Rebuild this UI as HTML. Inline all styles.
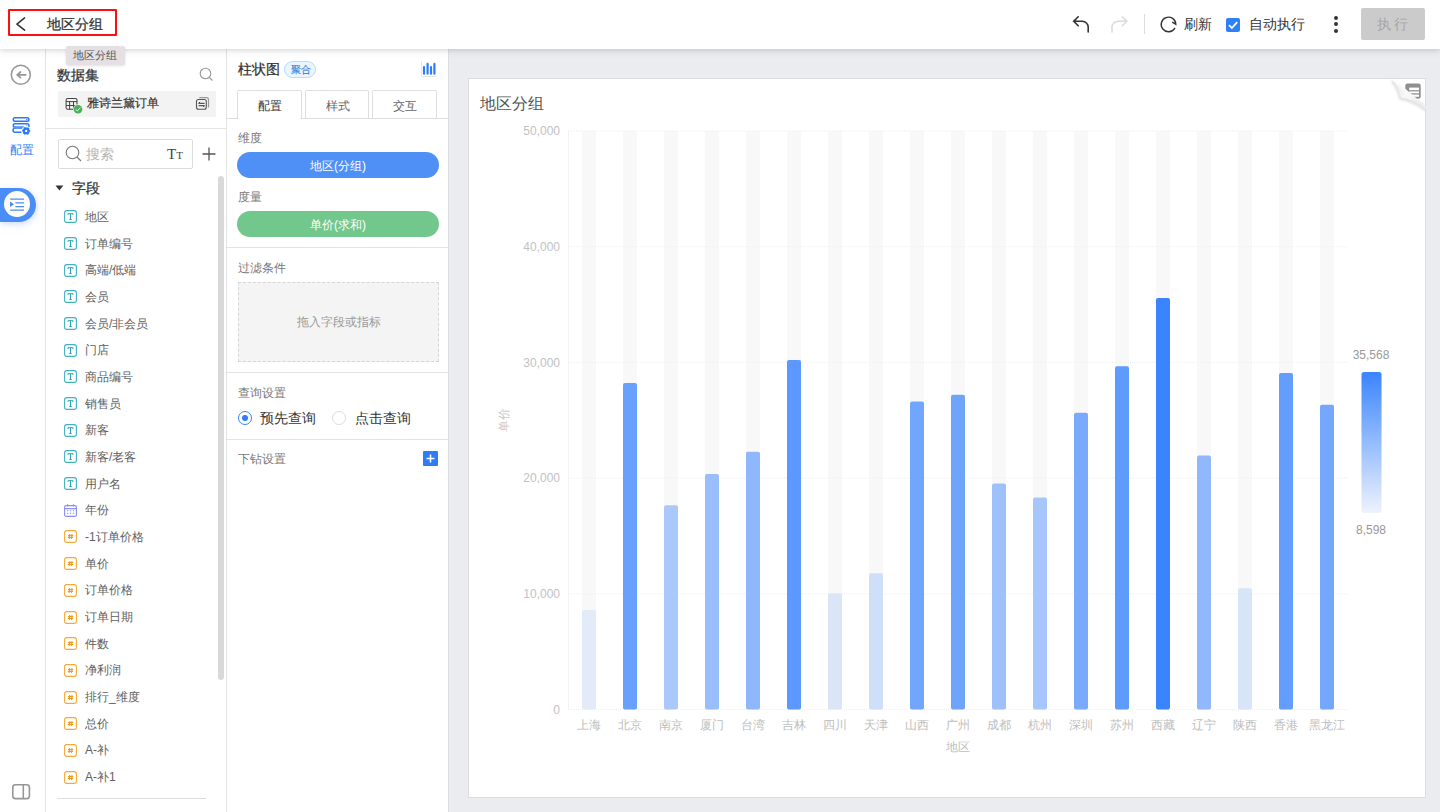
<!DOCTYPE html>
<html><head><meta charset="utf-8">
<style>
*{box-sizing:border-box;margin:0;padding:0}
html,body{width:1440px;height:812px;overflow:hidden}
body{position:relative;background:#ebecf0;font-family:"Liberation Sans",sans-serif;color:#333}
.a{position:absolute}
.hdr{left:0;top:0;width:1440px;height:49px;background:#fff;box-shadow:0 2px 3px rgba(0,0,0,.07),0 4px 7px rgba(0,0,0,.06);z-index:5}
.t{position:absolute;white-space:nowrap;line-height:1}
.nav{left:0;top:48px;width:46px;height:764px;background:#fff;border-right:1px solid #e3e3e3}
.p1{left:46px;top:48px;width:181px;height:764px;background:#fff;border-right:1px solid #e3e3e3}
.p2{left:227px;top:48px;width:222px;height:764px;background:#fff;border-right:1px solid #dedede}
.card{left:468px;top:78px;width:958px;height:720px;background:#fff;border:1px solid #dcdcdc}
.fi{position:absolute;left:64px;width:13px;height:13px;border-radius:2px}
.ft{border:1px solid #45b7c2;color:#2aa5b3;font-family:"Liberation Serif",serif;font-size:10px;line-height:11px;text-align:center}
.fn{border:1px solid #f5a937;color:#f09a1a;font-size:8px;line-height:11px;text-align:center;font-weight:bold}
.fl{position:absolute;left:84px;font-size:12px;color:#555;line-height:1;white-space:nowrap}
</style></head><body>

<!-- header -->
<div class="a hdr">
  <div class="a" style="left:8px;top:9px;width:109px;height:26.5px;border:2px solid #fe0f0f;border-radius:1px"></div>
  <svg class="a" style="left:14px;top:15px" width="14" height="18" viewBox="0 0 14 18"><path d="M10.6 2.9 L2.9 9.1 L10.6 15.2" fill="none" stroke="#333" stroke-width="1.5" stroke-linecap="round" stroke-linejoin="round"/></svg>
  <div class="t" style="left:47px;top:17px;font-size:14px;color:#333;-webkit-text-stroke:0.25px #333">地区分组</div>

  <!-- right toolbar -->
  <svg class="a" style="left:1071px;top:14px" width="20" height="20" viewBox="0 0 20 20"><path d="M7.2 2.8 L2.7 7.3 L7.2 11.8 M2.7 7.3 H11.2 A6 6 0 0 1 17.2 13.3 V18" fill="none" stroke="#333" stroke-width="1.6" stroke-linecap="round"/></svg>
  <svg class="a" style="left:1109px;top:14px" width="20" height="20" viewBox="0 0 20 20"><path d="M13.3 2.8 L17.8 7.3 L13.3 11.8 M17.8 7.3 H9 A6 6 0 0 0 3 13.3 V18" fill="none" stroke="#dcdcdc" stroke-width="1.6" stroke-linecap="round"/></svg>
  <div class="a" style="left:1144px;top:14px;width:1px;height:20px;background:#ddd"></div>
  <svg class="a" style="left:1159px;top:15px" width="20" height="19" viewBox="0 0 20 19"><path d="M15.7 13.3 A7.3 7.3 0 1 1 16.8 9.3 L13.7 7.3" fill="none" stroke="#333" stroke-width="1.4" stroke-linecap="round" stroke-linejoin="miter"/></svg>
  <div class="t" style="left:1184px;top:17px;font-size:14px;color:#333">刷新</div>
  <div class="a" style="left:1226px;top:18px;width:14px;height:14px;background:#2f7ff6;border-radius:2px"></div>
  <svg class="a" style="left:1226px;top:18px" width="14" height="14" viewBox="0 0 14 14"><path d="M3 7.2 L5.9 10 L11.2 4.2" fill="none" stroke="#fff" stroke-width="1.8"/></svg>
  <div class="t" style="left:1249px;top:17px;font-size:14px;color:#333">自动执行</div>
  <div class="a" style="left:1334px;top:16px;width:4px;height:4px;border-radius:2px;background:#333"></div>
  <div class="a" style="left:1334px;top:22px;width:4px;height:4px;border-radius:2px;background:#333"></div>
  <div class="a" style="left:1334px;top:28.5px;width:4px;height:4px;border-radius:2px;background:#333"></div>
  <div class="a" style="left:1361px;top:8px;width:64px;height:32px;background:#cbcbcb;border-radius:2px"></div>
  <div class="t" style="left:1377px;top:17px;font-size:14px;color:#a6a6a6;letter-spacing:3px">执行</div>
</div>

<!-- tooltip -->
<div class="a" style="left:66px;top:46px;width:59px;height:19px;background:#e4e0e4;border-radius:2px;z-index:6;box-shadow:0 1px 3px rgba(0,0,0,.12)"></div>
<div class="t" style="left:73px;top:50px;font-size:11px;color:#555;z-index:7">地区分组</div>

<div class="a nav"></div>
<svg class="a" style="left:10px;top:64px" width="22" height="22" viewBox="0 0 22 22"><circle cx="10.8" cy="10.8" r="9.5" fill="none" stroke="#969696" stroke-width="1.5"/><path d="M10.5 8 L7.1 10.8 L10.5 13.6 M7.1 10.8 H15.7" fill="none" stroke="#969696" stroke-width="1.7" stroke-linecap="round" stroke-linejoin="round"/></svg>
<svg class="a" style="left:6px;top:110px" width="30" height="30" viewBox="0 0 30 30"><g fill="none" stroke="#2b78f5" stroke-width="1.5" stroke-linecap="round"><rect x="7.25" y="7.75" width="15.7" height="3.5" rx="1.75"/><path d="M22.9 16.4 V15.5 A1.75 1.75 0 0 0 21.15 13.75 H9 A1.75 1.75 0 0 0 9 17.25 H17.4"/><path d="M9 18.3 A1.75 1.75 0 0 0 9 22.25 H15"/></g><path d="M8.2 16.6 H17.8 L16.4 18.9 H8.2 Z" fill="#5a96f7"/><circle cx="20.7" cy="9.5" r="0.8" fill="#5a96f7"/><circle cx="20.7" cy="15.5" r="0.7" fill="#8ab4fa"/><circle cx="20.2" cy="20.9" r="4.6" fill="#fff"/><circle cx="20.2" cy="20.9" r="2.3" fill="none" stroke="#2b78f5" stroke-width="2.2"/><circle cx="20.2" cy="20.9" r="3.4" fill="none" stroke="#2b78f5" stroke-width="1.3" stroke-dasharray="1.7 1.86" transform="rotate(-15 20.2 20.9)"/></svg>
<div class="t" style="left:10px;top:144px;font-size:12px;color:#2f7cf6">配置</div>
<div class="a" style="left:0;top:188px;width:36px;height:34px;background:#4a8df6;border-radius:0 17px 17px 0;box-shadow:1px 2px 6px rgba(60,120,240,.25)"></div>
<div class="a" style="left:4px;top:191px;width:26.3px;height:26.3px;background:#fffdf8;border-radius:50%"></div>
<svg class="a" style="left:9px;top:196px" width="17" height="17" viewBox="0 0 17 17"><path d="M1 5.5 L5 8.3 L1 11.1 Z" fill="#4a8df6"/><path d="M1.2 3.1 H15 M6.4 6.9 H15 M6.4 10.6 H15 M1.2 14.2 H15" stroke="#4a8df6" stroke-width="1.2"/></svg>
<svg class="a" style="left:12px;top:784px" width="19" height="16" viewBox="0 0 19 16"><rect x="0.8" y="0.8" width="16.6" height="13.8" rx="2.6" fill="none" stroke="#969696" stroke-width="1.6"/><path d="M11.3 0.8 V14.6" stroke="#969696" stroke-width="1.6"/></svg>


<!-- data panel -->
<div class="a p1"></div>
<div class="t" style="left:57px;top:68px;font-size:14px;color:#333;-webkit-text-stroke:0.25px #333">数据集</div>
<svg class="a" style="left:199px;top:67px" width="15" height="15" viewBox="0 0 15 15"><circle cx="6.5" cy="6.5" r="5.3" fill="none" stroke="#999" stroke-width="1.1"/><path d="M10.3 10.3 L13.5 13.5" stroke="#999" stroke-width="1.1"/></svg>
<div class="a" style="left:58px;top:90.5px;width:158px;height:26.5px;background:#f3f3f3"></div>
<svg class="a" style="left:60px;top:92px" width="24" height="24" viewBox="60 92 24 24"><rect x="66.1" y="98.4" width="10.9" height="10.9" rx="1.6" fill="none" stroke="#444" stroke-width="1.05"/><path d="M66.1 101.6 H77 M66.1 105.5 H77 M69.6 101.6 V109.3 M73.5 101.6 V109.3" stroke="#444" stroke-width="1"/><circle cx="78" cy="109.2" r="4.9" fill="#f3f3f3"/><circle cx="78" cy="109.2" r="4.3" fill="#4bb05a"/><path d="M75.7 109.4 L77.4 110.9 L80.4 107.7" fill="none" stroke="#fff" stroke-width="0.9"/></svg>
<div class="t" style="left:87px;top:97px;font-size:12px;color:#333;-webkit-text-stroke:0.2px #333">雅诗兰黛订单</div>
<svg class="a" style="left:190px;top:92px" width="24" height="24" viewBox="190 92 24 24"><path d="M199.3 97.7 H206.5 A2 2 0 0 1 208.5 99.7 V107.5" fill="none" stroke="#999" stroke-width="1.2"/><rect x="196.5" y="99.5" width="9.8" height="9.8" rx="2" fill="#f3f3f3" stroke="#555" stroke-width="1.1"/><path d="M198.6 103.3 H204.6 M198.6 103.3 L200 101.9 M198.6 105.7 H204.6 M204.6 105.7 L203.2 107.1" fill="none" stroke="#333" stroke-width="1"/></svg>
<div class="a" style="left:46px;top:128px;width:180px;height:1px;background:#e6e6e6"></div>
<div class="a" style="left:58px;top:139px;width:135px;height:30px;border:1px solid #dcdcdc;border-radius:2px"></div>
<svg class="a" style="left:65px;top:145px" width="18" height="18" viewBox="0 0 18 18"><circle cx="7.5" cy="7.5" r="6.3" fill="none" stroke="#777" stroke-width="1.1"/><path d="M12 12 L16 16" stroke="#777" stroke-width="1.1"/></svg>
<div class="t" style="left:86px;top:147px;font-size:14px;color:#b5b5b5">搜索</div>
<div class="t" style="left:167px;top:147px;font-size:15px;color:#444;font-family:'Liberation Serif',serif">T<span style="font-size:11px">T</span></div>
<svg class="a" style="left:201px;top:146px" width="16" height="16" viewBox="0 0 16 16"><path d="M8 1.5 V14.5 M1.5 8 H14.5" stroke="#555" stroke-width="1.3"/></svg>
<svg class="a" style="left:55px;top:185px" width="9" height="6" viewBox="0 0 9 6"><path d="M0.5 0.5 H8.3 L4.4 5.5 Z" fill="#333"/></svg>
<div class="t" style="left:72px;top:181px;font-size:14px;color:#333;-webkit-text-stroke:0.25px #333">字段</div>
<div class="a" style="left:218px;top:176px;width:6px;height:504px;background:#d9d9d9;border-radius:3px"></div>
<svg class="a" style="left:64px;top:210.4px" width="13" height="13" viewBox="0 0 13 13"><rect x="0.6" y="0.6" width="11.8" height="11.8" rx="2.2" fill="none" stroke="#3fb3bf" stroke-width="1.1"/><path d="M4 3.7 H9 M4 3.7 V4.9 M9 3.7 V4.9 M6.5 3.7 V9.5 M5.3 9.5 H7.7" fill="none" stroke="#2aa6b4" stroke-width="1"/></svg>
<div class="t" style="left:85px;top:210.9px;font-size:12px;color:#5e5e5e">地区</div>
<svg class="a" style="left:64px;top:237.1px" width="13" height="13" viewBox="0 0 13 13"><rect x="0.6" y="0.6" width="11.8" height="11.8" rx="2.2" fill="none" stroke="#3fb3bf" stroke-width="1.1"/><path d="M4 3.7 H9 M4 3.7 V4.9 M9 3.7 V4.9 M6.5 3.7 V9.5 M5.3 9.5 H7.7" fill="none" stroke="#2aa6b4" stroke-width="1"/></svg>
<div class="t" style="left:85px;top:237.6px;font-size:12px;color:#5e5e5e">订单编号</div>
<svg class="a" style="left:64px;top:263.7px" width="13" height="13" viewBox="0 0 13 13"><rect x="0.6" y="0.6" width="11.8" height="11.8" rx="2.2" fill="none" stroke="#3fb3bf" stroke-width="1.1"/><path d="M4 3.7 H9 M4 3.7 V4.9 M9 3.7 V4.9 M6.5 3.7 V9.5 M5.3 9.5 H7.7" fill="none" stroke="#2aa6b4" stroke-width="1"/></svg>
<div class="t" style="left:85px;top:264.2px;font-size:12px;color:#5e5e5e">高端/低端</div>
<svg class="a" style="left:64px;top:290.4px" width="13" height="13" viewBox="0 0 13 13"><rect x="0.6" y="0.6" width="11.8" height="11.8" rx="2.2" fill="none" stroke="#3fb3bf" stroke-width="1.1"/><path d="M4 3.7 H9 M4 3.7 V4.9 M9 3.7 V4.9 M6.5 3.7 V9.5 M5.3 9.5 H7.7" fill="none" stroke="#2aa6b4" stroke-width="1"/></svg>
<div class="t" style="left:85px;top:290.9px;font-size:12px;color:#5e5e5e">会员</div>
<svg class="a" style="left:64px;top:317.1px" width="13" height="13" viewBox="0 0 13 13"><rect x="0.6" y="0.6" width="11.8" height="11.8" rx="2.2" fill="none" stroke="#3fb3bf" stroke-width="1.1"/><path d="M4 3.7 H9 M4 3.7 V4.9 M9 3.7 V4.9 M6.5 3.7 V9.5 M5.3 9.5 H7.7" fill="none" stroke="#2aa6b4" stroke-width="1"/></svg>
<div class="t" style="left:85px;top:317.6px;font-size:12px;color:#5e5e5e">会员/非会员</div>
<svg class="a" style="left:64px;top:343.8px" width="13" height="13" viewBox="0 0 13 13"><rect x="0.6" y="0.6" width="11.8" height="11.8" rx="2.2" fill="none" stroke="#3fb3bf" stroke-width="1.1"/><path d="M4 3.7 H9 M4 3.7 V4.9 M9 3.7 V4.9 M6.5 3.7 V9.5 M5.3 9.5 H7.7" fill="none" stroke="#2aa6b4" stroke-width="1"/></svg>
<div class="t" style="left:85px;top:344.2px;font-size:12px;color:#5e5e5e">门店</div>
<svg class="a" style="left:64px;top:370.4px" width="13" height="13" viewBox="0 0 13 13"><rect x="0.6" y="0.6" width="11.8" height="11.8" rx="2.2" fill="none" stroke="#3fb3bf" stroke-width="1.1"/><path d="M4 3.7 H9 M4 3.7 V4.9 M9 3.7 V4.9 M6.5 3.7 V9.5 M5.3 9.5 H7.7" fill="none" stroke="#2aa6b4" stroke-width="1"/></svg>
<div class="t" style="left:85px;top:370.9px;font-size:12px;color:#5e5e5e">商品编号</div>
<svg class="a" style="left:64px;top:397.1px" width="13" height="13" viewBox="0 0 13 13"><rect x="0.6" y="0.6" width="11.8" height="11.8" rx="2.2" fill="none" stroke="#3fb3bf" stroke-width="1.1"/><path d="M4 3.7 H9 M4 3.7 V4.9 M9 3.7 V4.9 M6.5 3.7 V9.5 M5.3 9.5 H7.7" fill="none" stroke="#2aa6b4" stroke-width="1"/></svg>
<div class="t" style="left:85px;top:397.6px;font-size:12px;color:#5e5e5e">销售员</div>
<svg class="a" style="left:64px;top:423.8px" width="13" height="13" viewBox="0 0 13 13"><rect x="0.6" y="0.6" width="11.8" height="11.8" rx="2.2" fill="none" stroke="#3fb3bf" stroke-width="1.1"/><path d="M4 3.7 H9 M4 3.7 V4.9 M9 3.7 V4.9 M6.5 3.7 V9.5 M5.3 9.5 H7.7" fill="none" stroke="#2aa6b4" stroke-width="1"/></svg>
<div class="t" style="left:85px;top:424.3px;font-size:12px;color:#5e5e5e">新客</div>
<svg class="a" style="left:64px;top:450.4px" width="13" height="13" viewBox="0 0 13 13"><rect x="0.6" y="0.6" width="11.8" height="11.8" rx="2.2" fill="none" stroke="#3fb3bf" stroke-width="1.1"/><path d="M4 3.7 H9 M4 3.7 V4.9 M9 3.7 V4.9 M6.5 3.7 V9.5 M5.3 9.5 H7.7" fill="none" stroke="#2aa6b4" stroke-width="1"/></svg>
<div class="t" style="left:85px;top:450.9px;font-size:12px;color:#5e5e5e">新客/老客</div>
<svg class="a" style="left:64px;top:477.1px" width="13" height="13" viewBox="0 0 13 13"><rect x="0.6" y="0.6" width="11.8" height="11.8" rx="2.2" fill="none" stroke="#3fb3bf" stroke-width="1.1"/><path d="M4 3.7 H9 M4 3.7 V4.9 M9 3.7 V4.9 M6.5 3.7 V9.5 M5.3 9.5 H7.7" fill="none" stroke="#2aa6b4" stroke-width="1"/></svg>
<div class="t" style="left:85px;top:477.6px;font-size:12px;color:#5e5e5e">用户名</div>
<svg class="a" style="left:64px;top:503.8px" width="13" height="13" viewBox="0 0 13 13"><rect x="0.6" y="1.6" width="11.8" height="10.8" rx="1.5" fill="none" stroke="#8a8ff0" stroke-width="1.1"/><path d="M0.6 4.6 H12.4 M3.5 0.3 V2.6 M9.5 0.3 V2.6" fill="none" stroke="#8a8ff0" stroke-width="1.1"/><path d="M3 6.8h1.3M5.9 6.8h1.3M8.8 6.8h1.3M3 9.2h1.3M5.9 9.2h1.3M8.8 9.2h1.3" stroke="#8a8ff0" stroke-width="1.1"/></svg>
<div class="t" style="left:85px;top:504.3px;font-size:12px;color:#5e5e5e">年份</div>
<svg class="a" style="left:64px;top:530.4px" width="13" height="13" viewBox="0 0 13 13"><rect x="0.6" y="0.6" width="11.8" height="11.8" rx="2.2" fill="none" stroke="#f5ab3c" stroke-width="1.1"/><path d="M5.7 4 L5.2 9 M8 4 L7.5 9 M4 5.6 H9.2 M3.8 7.5 H9" fill="none" stroke="#ef9a18" stroke-width="1.05"/></svg>
<div class="t" style="left:85px;top:530.9px;font-size:12px;color:#5e5e5e">-1订单价格</div>
<svg class="a" style="left:64px;top:557.1px" width="13" height="13" viewBox="0 0 13 13"><rect x="0.6" y="0.6" width="11.8" height="11.8" rx="2.2" fill="none" stroke="#f5ab3c" stroke-width="1.1"/><path d="M5.7 4 L5.2 9 M8 4 L7.5 9 M4 5.6 H9.2 M3.8 7.5 H9" fill="none" stroke="#ef9a18" stroke-width="1.05"/></svg>
<div class="t" style="left:85px;top:557.6px;font-size:12px;color:#5e5e5e">单价</div>
<svg class="a" style="left:64px;top:583.8px" width="13" height="13" viewBox="0 0 13 13"><rect x="0.6" y="0.6" width="11.8" height="11.8" rx="2.2" fill="none" stroke="#f5ab3c" stroke-width="1.1"/><path d="M5.7 4 L5.2 9 M8 4 L7.5 9 M4 5.6 H9.2 M3.8 7.5 H9" fill="none" stroke="#ef9a18" stroke-width="1.05"/></svg>
<div class="t" style="left:85px;top:584.3px;font-size:12px;color:#5e5e5e">订单价格</div>
<svg class="a" style="left:64px;top:610.5px" width="13" height="13" viewBox="0 0 13 13"><rect x="0.6" y="0.6" width="11.8" height="11.8" rx="2.2" fill="none" stroke="#f5ab3c" stroke-width="1.1"/><path d="M5.7 4 L5.2 9 M8 4 L7.5 9 M4 5.6 H9.2 M3.8 7.5 H9" fill="none" stroke="#ef9a18" stroke-width="1.05"/></svg>
<div class="t" style="left:85px;top:611.0px;font-size:12px;color:#5e5e5e">订单日期</div>
<svg class="a" style="left:64px;top:637.1px" width="13" height="13" viewBox="0 0 13 13"><rect x="0.6" y="0.6" width="11.8" height="11.8" rx="2.2" fill="none" stroke="#f5ab3c" stroke-width="1.1"/><path d="M5.7 4 L5.2 9 M8 4 L7.5 9 M4 5.6 H9.2 M3.8 7.5 H9" fill="none" stroke="#ef9a18" stroke-width="1.05"/></svg>
<div class="t" style="left:85px;top:637.6px;font-size:12px;color:#5e5e5e">件数</div>
<svg class="a" style="left:64px;top:663.8px" width="13" height="13" viewBox="0 0 13 13"><rect x="0.6" y="0.6" width="11.8" height="11.8" rx="2.2" fill="none" stroke="#f5ab3c" stroke-width="1.1"/><path d="M5.7 4 L5.2 9 M8 4 L7.5 9 M4 5.6 H9.2 M3.8 7.5 H9" fill="none" stroke="#ef9a18" stroke-width="1.05"/></svg>
<div class="t" style="left:85px;top:664.3px;font-size:12px;color:#5e5e5e">净利润</div>
<svg class="a" style="left:64px;top:690.5px" width="13" height="13" viewBox="0 0 13 13"><rect x="0.6" y="0.6" width="11.8" height="11.8" rx="2.2" fill="none" stroke="#f5ab3c" stroke-width="1.1"/><path d="M5.7 4 L5.2 9 M8 4 L7.5 9 M4 5.6 H9.2 M3.8 7.5 H9" fill="none" stroke="#ef9a18" stroke-width="1.05"/></svg>
<div class="t" style="left:85px;top:691.0px;font-size:12px;color:#5e5e5e">排行_维度</div>
<svg class="a" style="left:64px;top:717.1px" width="13" height="13" viewBox="0 0 13 13"><rect x="0.6" y="0.6" width="11.8" height="11.8" rx="2.2" fill="none" stroke="#f5ab3c" stroke-width="1.1"/><path d="M5.7 4 L5.2 9 M8 4 L7.5 9 M4 5.6 H9.2 M3.8 7.5 H9" fill="none" stroke="#ef9a18" stroke-width="1.05"/></svg>
<div class="t" style="left:85px;top:717.6px;font-size:12px;color:#5e5e5e">总价</div>
<svg class="a" style="left:64px;top:743.8px" width="13" height="13" viewBox="0 0 13 13"><rect x="0.6" y="0.6" width="11.8" height="11.8" rx="2.2" fill="none" stroke="#f5ab3c" stroke-width="1.1"/><path d="M5.7 4 L5.2 9 M8 4 L7.5 9 M4 5.6 H9.2 M3.8 7.5 H9" fill="none" stroke="#ef9a18" stroke-width="1.05"/></svg>
<div class="t" style="left:85px;top:744.3px;font-size:12px;color:#5e5e5e">A-补</div>
<svg class="a" style="left:64px;top:770.5px" width="13" height="13" viewBox="0 0 13 13"><rect x="0.6" y="0.6" width="11.8" height="11.8" rx="2.2" fill="none" stroke="#f5ab3c" stroke-width="1.1"/><path d="M5.7 4 L5.2 9 M8 4 L7.5 9 M4 5.6 H9.2 M3.8 7.5 H9" fill="none" stroke="#ef9a18" stroke-width="1.05"/></svg>
<div class="t" style="left:85px;top:771.0px;font-size:12px;color:#5e5e5e">A-补1</div>
<div class="a" style="left:57px;top:798px;width:149px;height:1px;background:#dedede"></div>


<!-- config panel -->
<div class="a p2"></div>
<div class="t" style="left:238px;top:62px;font-size:14px;color:#333;-webkit-text-stroke:0.25px #333">柱状图</div>
<div class="a" style="left:284px;top:61px;width:32px;height:17px;border:1px solid #b5ddfb;background:#e9f6ff;border-radius:9px"></div>
<div class="t" style="left:291px;top:64.5px;font-size:9.5px;color:#3b7fe3;letter-spacing:0.2px;-webkit-text-stroke:0.15px #3b7fe3">聚合</div>
<svg class="a" style="left:415px;top:55px" width="30" height="30" viewBox="415 55 30 30"><path d="M421.5 61.3 V76.5 H436.5" fill="none" stroke="#e6e6e6" stroke-width="1"/><path d="M424 67.2 V73.7 M427.6 63.9 V73.7 M431 67.2 V73.7 M434.4 63.9 V73.7" stroke="#2f7cf6" stroke-width="2.2" stroke-linecap="round"/></svg>
<div class="a" style="left:227px;top:118px;width:221px;height:1px;background:#dedede"></div>
<div class="a" style="left:237px;top:90px;width:65px;height:29px;border:1px solid #dedede;border-bottom:none;background:#fff;border-radius:2px 2px 0 0"></div>
<div class="a" style="left:305px;top:90px;width:64px;height:28px;border:1px solid #dedede;border-bottom:none;border-radius:2px 2px 0 0"></div>
<div class="a" style="left:372px;top:90px;width:65px;height:28px;border:1px solid #dedede;border-bottom:none;border-radius:2px 2px 0 0"></div>
<div class="t" style="left:258px;top:99.5px;font-size:12px;color:#333">配置</div>
<div class="t" style="left:326px;top:99.5px;font-size:12px;color:#666">样式</div>
<div class="t" style="left:393px;top:99.5px;font-size:12px;color:#666">交互</div>
<div class="t" style="left:238px;top:132px;font-size:12px;color:#777">维度</div>
<div class="a" style="left:237px;top:152px;width:202px;height:26px;background:#4f90f7;border-radius:13px"></div>
<div class="t" style="left:238px;top:159.5px;width:200px;text-align:center;font-size:12px;color:#fff">地区(分组)</div>
<div class="t" style="left:238px;top:191px;font-size:12px;color:#777">度量</div>
<div class="a" style="left:237px;top:211px;width:202px;height:26px;background:#72c78c;border-radius:13px"></div>
<div class="t" style="left:238px;top:219px;width:200px;text-align:center;font-size:12px;color:#fff">单价(求和)</div>
<div class="a" style="left:227px;top:247px;width:221px;height:1px;background:#e3e3e3"></div>
<div class="t" style="left:238px;top:262px;font-size:12px;color:#777">过滤条件</div>
<div class="a" style="left:238px;top:282px;width:201px;height:80px;background:#f4f4f4;border:1px dashed #d6d6d6"></div>
<div class="t" style="left:238px;top:316px;width:201px;text-align:center;font-size:12px;color:#999">拖入字段或指标</div>
<div class="a" style="left:227px;top:372px;width:221px;height:1px;background:#e3e3e3"></div>
<div class="t" style="left:238px;top:387px;font-size:12px;color:#777">查询设置</div>
<div class="a" style="left:237.5px;top:411.2px;width:14px;height:14px;border:1px solid #3b82f6;border-radius:50%"></div>
<div class="a" style="left:241.5px;top:415.2px;width:6px;height:6px;background:#2f7cf6;border-radius:50%"></div>
<div class="t" style="left:260px;top:411px;font-size:14px;color:#333">预先查询</div>
<div class="a" style="left:332px;top:411px;width:14px;height:14px;border:1px solid #dcdcdc;border-radius:50%"></div>
<div class="t" style="left:355px;top:411px;font-size:14px;color:#333">点击查询</div>
<div class="a" style="left:227px;top:439px;width:221px;height:1px;background:#e3e3e3"></div>
<div class="t" style="left:238px;top:453px;font-size:12px;color:#777">下钻设置</div>
<div class="a" style="left:423px;top:451px;width:15px;height:15px;background:#2f7cf6;border-radius:1px"></div>
<svg class="a" style="left:423px;top:451px" width="15" height="15" viewBox="0 0 15 15"><path d="M7.5 3.5 V11.5 M3.5 7.5 H11.5" stroke="#fff" stroke-width="1.5"/></svg>


<!-- chart card -->
<div class="a card"></div>
<div class="t" style="left:480px;top:96px;font-size:16px;color:#555">地区分组</div>
<svg class="a" style="left:0;top:0" width="1440" height="812" viewBox="0 0 1440 812">
<line x1="568.5" y1="131" x2="568.5" y2="709.5" stroke="#f3f3f3" stroke-width="1"/>
<rect x="582" y="131" width="14" height="578.5" fill="#f8f8f8"/>
<rect x="623" y="131" width="14" height="578.5" fill="#f8f8f8"/>
<rect x="664" y="131" width="14" height="578.5" fill="#f8f8f8"/>
<rect x="705" y="131" width="14" height="578.5" fill="#f8f8f8"/>
<rect x="746" y="131" width="14" height="578.5" fill="#f8f8f8"/>
<rect x="787" y="131" width="14" height="578.5" fill="#f8f8f8"/>
<rect x="828" y="131" width="14" height="578.5" fill="#f8f8f8"/>
<rect x="869" y="131" width="14" height="578.5" fill="#f8f8f8"/>
<rect x="910" y="131" width="14" height="578.5" fill="#f8f8f8"/>
<rect x="951" y="131" width="14" height="578.5" fill="#f8f8f8"/>
<rect x="992" y="131" width="14" height="578.5" fill="#f8f8f8"/>
<rect x="1033" y="131" width="14" height="578.5" fill="#f8f8f8"/>
<rect x="1074" y="131" width="14" height="578.5" fill="#f8f8f8"/>
<rect x="1115" y="131" width="14" height="578.5" fill="#f8f8f8"/>
<rect x="1156" y="131" width="14" height="578.5" fill="#f8f8f8"/>
<rect x="1197" y="131" width="14" height="578.5" fill="#f8f8f8"/>
<rect x="1238" y="131" width="14" height="578.5" fill="#f8f8f8"/>
<rect x="1279" y="131" width="14" height="578.5" fill="#f8f8f8"/>
<rect x="1320" y="131" width="14" height="578.5" fill="#f8f8f8"/>
<line x1="568" y1="709.5" x2="1348" y2="709.5" stroke="#efefef" stroke-width="1" stroke-dasharray="1 1"/>
<text x="560" y="713.8" text-anchor="end" font-size="12" fill="#c2c2c2">0</text>
<line x1="568" y1="593.8" x2="1348" y2="593.8" stroke="#efefef" stroke-width="1" stroke-dasharray="1 1"/>
<text x="560" y="598.1" text-anchor="end" font-size="12" fill="#c2c2c2">10,000</text>
<line x1="568" y1="478.1" x2="1348" y2="478.1" stroke="#efefef" stroke-width="1" stroke-dasharray="1 1"/>
<text x="560" y="482.4" text-anchor="end" font-size="12" fill="#c2c2c2">20,000</text>
<line x1="568" y1="362.4" x2="1348" y2="362.4" stroke="#efefef" stroke-width="1" stroke-dasharray="1 1"/>
<text x="560" y="366.7" text-anchor="end" font-size="12" fill="#c2c2c2">30,000</text>
<line x1="568" y1="246.7" x2="1348" y2="246.7" stroke="#efefef" stroke-width="1" stroke-dasharray="1 1"/>
<text x="560" y="251.0" text-anchor="end" font-size="12" fill="#c2c2c2">40,000</text>
<line x1="568" y1="131.0" x2="1348" y2="131.0" stroke="#efefef" stroke-width="1" stroke-dasharray="1 1"/>
<text x="560" y="135.3" text-anchor="end" font-size="12" fill="#c2c2c2">50,000</text>
<rect x="582" y="610.0" width="14" height="99.5" rx="2" fill="rgb(228, 235, 248)"/>
<text x="589" y="728.5" text-anchor="middle" font-size="12" fill="#bdbdbd">上海</text>
<rect x="623" y="383.0" width="14" height="326.5" rx="2" fill="rgb(104, 160, 253)"/>
<text x="630" y="728.5" text-anchor="middle" font-size="12" fill="#bdbdbd">北京</text>
<rect x="664" y="505.3" width="14" height="204.2" rx="2" fill="rgb(171, 200, 250)"/>
<text x="671" y="728.5" text-anchor="middle" font-size="12" fill="#bdbdbd">南京</text>
<rect x="705" y="474.0" width="14" height="235.5" rx="2" fill="rgb(154, 190, 251)"/>
<text x="712" y="728.5" text-anchor="middle" font-size="12" fill="#bdbdbd">厦门</text>
<rect x="746" y="451.7" width="14" height="257.8" rx="2" fill="rgb(142, 183, 252)"/>
<text x="753" y="728.5" text-anchor="middle" font-size="12" fill="#bdbdbd">台湾</text>
<rect x="787" y="360.0" width="14" height="349.5" rx="2" fill="rgb(92, 152, 254)"/>
<text x="794" y="728.5" text-anchor="middle" font-size="12" fill="#bdbdbd">吉林</text>
<rect x="828" y="593.3" width="14" height="116.2" rx="2" fill="rgb(219, 229, 248)"/>
<text x="835" y="728.5" text-anchor="middle" font-size="12" fill="#bdbdbd">四川</text>
<rect x="869" y="573.2" width="14" height="136.3" rx="2" fill="rgb(208, 223, 249)"/>
<text x="876" y="728.5" text-anchor="middle" font-size="12" fill="#bdbdbd">天津</text>
<rect x="910" y="401.5" width="14" height="308.0" rx="2" fill="rgb(114, 166, 253)"/>
<text x="917" y="728.5" text-anchor="middle" font-size="12" fill="#bdbdbd">山西</text>
<rect x="951" y="394.8" width="14" height="314.7" rx="2" fill="rgb(111, 164, 253)"/>
<text x="958" y="728.5" text-anchor="middle" font-size="12" fill="#bdbdbd">广州</text>
<rect x="992" y="483.6" width="14" height="225.9" rx="2" fill="rgb(159, 193, 251)"/>
<text x="999" y="728.5" text-anchor="middle" font-size="12" fill="#bdbdbd">成都</text>
<rect x="1033" y="497.4" width="14" height="212.1" rx="2" fill="rgb(167, 198, 251)"/>
<text x="1040" y="728.5" text-anchor="middle" font-size="12" fill="#bdbdbd">杭州</text>
<rect x="1074" y="412.8" width="14" height="296.7" rx="2" fill="rgb(121, 170, 252)"/>
<text x="1081" y="728.5" text-anchor="middle" font-size="12" fill="#bdbdbd">深圳</text>
<rect x="1115" y="366.3" width="14" height="343.2" rx="2" fill="rgb(95, 155, 253)"/>
<text x="1122" y="728.5" text-anchor="middle" font-size="12" fill="#bdbdbd">苏州</text>
<rect x="1156" y="298.0" width="14" height="411.5" rx="2" fill="rgb(58, 132, 255)"/>
<text x="1163" y="728.5" text-anchor="middle" font-size="12" fill="#bdbdbd">西藏</text>
<rect x="1197" y="455.5" width="14" height="254.0" rx="2" fill="rgb(144, 184, 251)"/>
<text x="1204" y="728.5" text-anchor="middle" font-size="12" fill="#bdbdbd">辽宁</text>
<rect x="1238" y="588.3" width="14" height="121.2" rx="2" fill="rgb(216, 228, 248)"/>
<text x="1245" y="728.5" text-anchor="middle" font-size="12" fill="#bdbdbd">陕西</text>
<rect x="1279" y="373.0" width="14" height="336.5" rx="2" fill="rgb(99, 157, 253)"/>
<text x="1286" y="728.5" text-anchor="middle" font-size="12" fill="#bdbdbd">香港</text>
<rect x="1320" y="404.8" width="14" height="304.7" rx="2" fill="rgb(116, 167, 253)"/>
<text x="1327" y="728.5" text-anchor="middle" font-size="12" fill="#bdbdbd">黑龙江</text>
<text x="958" y="751" text-anchor="middle" font-size="12" fill="#bdbdbd">地区</text>
<text transform="translate(508 420) rotate(-90)" text-anchor="middle" font-size="12" fill="#c8c8c8">单价</text>
<defs><linearGradient id="lg" x1="0" y1="0" x2="0" y2="1"><stop offset="0" stop-color="#3a84ff"/><stop offset="1" stop-color="#eef3fd"/></linearGradient></defs>
<rect x="1361.5" y="372" width="20" height="141" rx="2.5" fill="url(#lg)"/>
<text x="1371" y="358.5" text-anchor="middle" font-size="12" fill="#999">35,568</text>
<text x="1371" y="533.5" text-anchor="middle" font-size="12" fill="#999">8,598</text>
</svg>
<svg class="a" style="left:1385px;top:79px" width="41" height="40" viewBox="1385 79 41 40">
<defs><linearGradient id="fl" x1="0" y1="0" x2="1" y2="1"><stop offset="0" stop-color="#fdfdfd"/><stop offset="1" stop-color="#f3f3f3"/></linearGradient>
<filter id="bl" x="-50%" y="-50%" width="200%" height="200%"><feGaussianBlur stdDeviation="1.5"/></filter>
<clipPath id="cc"><rect x="1385" y="79" width="40.5" height="40"/></clipPath></defs>
<rect x="1405.3" y="83.4" width="15.4" height="15.4" rx="2.2" fill="#8f8f8f"/>
<rect x="1409.2" y="87.6" width="9.8" height="2.6" fill="#fff"/>
<rect x="1409.2" y="91.4" width="9.8" height="1.9" fill="#fff"/>
<rect x="1409.2" y="94.6" width="9.8" height="2.2" fill="#fff"/>
<g clip-path="url(#cc)">
<path d="M1392 81 C1397 85 1399 91 1400.5 98 C1409 99.5 1418 103 1426 110" fill="none" stroke="#d2d2d2" stroke-width="2.5" filter="url(#bl)"/>
<path d="M1394 79 L1426 106.5 L1426 109.5 C1418 102 1409 98.5 1401 97.5 C1399.5 90 1397.5 84 1391.5 79 Z" fill="url(#fl)"/>
<path d="M1397.5 86 Q1400 92 1403 95" fill="none" stroke="#ececec" stroke-width="2.5" filter="url(#bl)"/>
<path d="M1412 99.5 Q1419 102.5 1424 106.5" fill="none" stroke="#e8e8e8" stroke-width="2.5" filter="url(#bl)"/>
</g>
</svg>
</body></html>
